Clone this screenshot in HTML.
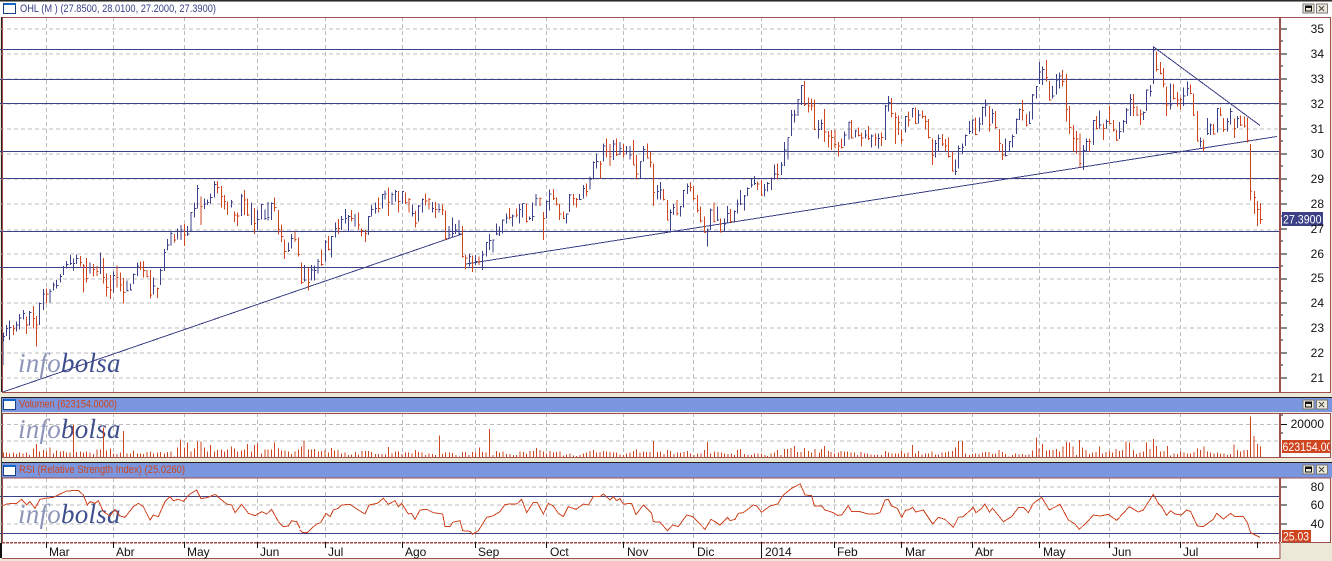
<!DOCTYPE html>
<html><head><meta charset="utf-8"><title>OHL</title>
<style>html,body{margin:0;padding:0;background:#ece9d8}svg{display:block}text{font-family:"Liberation Sans",sans-serif}.l{font-family:"Liberation Serif",serif;font-style:italic;font-size:27px;letter-spacing:.25px}</style></head>
<body>
<svg width="1332" height="561" viewBox="0 0 1332 561" xmlns="http://www.w3.org/2000/svg">
<rect width="1332" height="561" fill="#ece9d8"/>
<rect width="1332" height="1.5" fill="#2a2a2a"/>
<rect x="0" y="2" width="1332" height="15" fill="#fff"/>
<rect x="2" y="17" width="1328" height="375" fill="#fff"/>
<rect x="2" y="413" width="1328" height="44" fill="#fff"/>
<rect x="2" y="478" width="1328" height="64" fill="#fff"/>
<rect x="2" y="542" width="1277" height="16" fill="#fff"/>
<rect x="1" y="397" width="1331" height="1" fill="#222"/><rect x="1" y="398" width="1331" height="14" fill="#7a96de"/>
<rect x="1" y="462" width="1331" height="1" fill="#222"/><rect x="1" y="463" width="1331" height="14.5" fill="#7a96de"/>
<rect x="1" y="17" width="1" height="375" fill="#222"/>
<rect x="1" y="397" width="1" height="65" fill="#444"/><rect x="1" y="462" width="1" height="81" fill="#444"/><rect x="0" y="543" width="2" height="15" fill="#111"/>
<g shape-rendering="crispEdges">
<path d="M0 29H1279M0 54H1279M0 79H1279M0 104H1279M0 129H1279M0 154H1279M0 179H1279M0 204H1279M0 230H1279M0 254H1279M0 279H1279M0 303H1279M0 328H1279M0 353H1279M0 378H1279M0 424.5H1279M0 441H1279M0 487H1279M0 505H1279M0 524H1279" stroke="#bcbcbc" stroke-dasharray="4 3" fill="none"/>
<path d="M46.5 17V392M113.5 17V392M184.5 17V392M257.5 17V392M325.5 17V392M402.5 17V392M475.5 17V392M546.5 17V392M623.5 17V392M693.5 17V392M761.5 17V392M834.5 17V392M901.5 17V392M972.5 17V392M1039.5 17V392M1109.5 17V392M1180.5 17V392M46.5 413V457M113.5 413V457M184.5 413V457M257.5 413V457M325.5 413V457M402.5 413V457M475.5 413V457M546.5 413V457M623.5 413V457M693.5 413V457M761.5 413V457M834.5 413V457M901.5 413V457M972.5 413V457M1039.5 413V457M1109.5 413V457M1180.5 413V457M46.5 478V542M113.5 478V542M184.5 478V542M257.5 478V542M325.5 478V542M402.5 478V542M475.5 478V542M546.5 478V542M623.5 478V542M693.5 478V542M761.5 478V542M834.5 478V542M901.5 478V542M972.5 478V542M1039.5 478V542M1109.5 478V542M1180.5 478V542" stroke="#bcbcbc" stroke-dasharray="4 3" fill="none"/>
</g>
<text class="l" x="18" y="372" fill="#8d95b8" style="font-family:'Liberation Serif',serif" >info<tspan fill="#3f4f8c">bolsa</tspan></text>
<text class="l" x="18" y="438" fill="#8d95b8" style="font-family:'Liberation Serif',serif">info<tspan fill="#3f4f8c">bolsa</tspan></text>
<text class="l" x="18" y="523" fill="#8d95b8" style="font-family:'Liberation Serif',serif">info<tspan fill="#3f4f8c">bolsa</tspan></text>
<g shape-rendering="crispEdges" fill="none">
<path d="M0 49.5H1279M0 79.5H1279M0 103.5H1279M0 151.5H1279M0 178.5H1279M0 231.5H1279M0 267.5H1279M0 496.5H1279M0 533.5H1279" stroke="#3c4187"/>
<path d="M3 392L462 234M466 264L1277 136.5M1153 46.5L1260 125.5" stroke="#3c4187"/>
<g transform="translate(0 160) scale(.33333)" stroke-width="3">
<path stroke="#3c4187" d="M10 518V545M10 530h5M19 495V528M19 506h5M29 482V540M29 502h5M50 484V515M50 495h5M59 462V508M59 474h5M70 450V478M70 460h5M89 453V496M89 458h5M119 427V495M119 430h5M130 387V450M130 402h5M150 387V427M150 395h5M160 368V392M160 375h5M170 360V385M170 376h5M181 342V368M181 350h5M191 318V345M191 322h5M200 303V325M200 313h5M211 285V315M211 310h5M220 295V332M220 310h5M230 283V312M230 295h5M270 307V340M301 277V342M340 335V398M340 346h5M381 362V395M381 392h5M391 370V392M391 390h5M401 340V372M401 344h5M412 308V348M412 318h5M461 353V403M461 378h5M482 325V375M482 332h5M493 267V333M493 277h5M503 237V272M503 255h5M513 215V256M513 220h5M533 205V238M533 215h5M543 195V240M543 210h5M563 198V228M563 222h5M573 156V215M573 157h5M584 128V172M584 145h5M592 75V145M592 85h5M613 115V147M613 132h5M622 118V135M622 128h5M632 100V130M632 112h5M644 63V113M644 73h5M694 120V142M694 126h5M724 102V168M724 108h5M754 128V195M773 150V210M773 178h5M785 132V178M785 134h5M795 148V180M795 175h5M804 126V182M804 172h5M815 127V180M815 130h5M865 247V276M865 272h5M875 222V265M875 235h5M914 315V365M914 360h5M935 315V362M935 330h5M944 316V362M944 332h5M954 297V340M954 305h5M9 545V615"/>
<path stroke="#cf4520" d="M40 495V525M40 505h5M80 470V522M80 495h5M100 438V505M100 475h5M109 468V560M109 495h5M140 385V430M140 402h5M241 288V320M241 307h5M250 312V398M250 318h5M260 294V368M260 355h5M280 312V350M280 328h5M291 318V348M291 335h5M310 294V370M310 352h5M320 340V410M320 382h5M331 345V417M331 390h5M351 316V382M351 352h5M361 338V395M361 375h5M371 354V430M371 397h5M421 305V330M421 322h5M431 303V353M431 332h5M441 330V352M441 350h5M451 330V416M451 405h5M472 382V414M472 385h5M523 222V248M523 240h5M553 192V258M553 225h5M603 110V195M603 140h5M653 63V100M653 82h5M664 78V142M664 110h5M673 105V148M673 124h5M683 125V165M704 155V186M704 165h5M713 157V198M713 168h5M733 90V165M733 120h5M743 115V168M743 165h5M763 144V222M763 190h5M824 113V155M824 142h5M835 150V224M835 208h5M845 193V246M845 230h5M854 238V297M854 274h5M885 215V246M885 238h5M895 232V290M895 283h5M905 307V372M905 368h5M925 322V392M925 368h5"/>
</g>
<g transform="translate(320 120) scale(.33333)" stroke-width="3">
<path stroke="#3c4187" d="M16 360V425M16 366h5M35 348V413M35 350h5M46 308V352M46 325h5M65 288V330M65 298h5M76 267V310M76 295h5M86 285V334M86 290h5M105 282V320M146 288V345M146 290h5M155 255V290M155 268h5M166 248V280M166 266h5M187 222V266M187 224h5M195 212V238M195 222h5M216 218V255M216 224h5M226 210V245M226 214h5M247 213V250M247 215h5M278 253V290M278 280h5M296 255V305M296 258h5M307 235V278M307 238h5M337 246V278M337 265h5M357 250V278M357 268h5M387 318V355M387 345h5M397 292V352M397 340h5M407 312V342M407 330h5M417 300V344M417 340h5M448 400V440M448 410h5M467 405V435M467 425h5M487 393V450M487 405h5M499 366V410M499 368h5M509 342V390M509 362h5M519 358V398M519 360h5M530 310V345M530 342h5M539 320V348M539 335h5M548 298V340M548 300h5M559 280V310M559 294h5M578 284V320M578 288h5M598 252V310M598 268h5M608 250V292M608 250h5M628 290V300M628 296h5M638 248V303M638 290h5M648 222V258M648 235h5M680 242V296M680 245h5M689 208V272M689 222h5M740 280V310M740 282h5M749 222V276M749 225h5M779 222V240M779 238h5M790 195V235M790 205h5M810 170V208M810 178h5M820 125V178M820 127h5M830 100V145M830 125h5M851 70V125M851 78h5M881 60V120M881 72h5M900 66V105M900 85h5M920 78V103M920 95h5M930 78V118M930 105h5"/>
<path stroke="#cf4520" d="M5 388V438M5 433h5M26 348V392M26 388h5M55 297V342M55 326h5M95 270V305M95 295h5M115 278V328M115 315h5M125 325V350M125 332h5M136 330V366M136 340h5M176 232V278M176 266h5M205 202V288M205 247h5M236 213V277M236 245h5M257 218V252M257 248h5M267 234V278M267 238h5M287 272V323M287 309h5M317 220V256M317 243h5M327 234V268M327 238h5M347 246V294M347 268h5M367 253V285M367 270h5M377 272V360M377 355h5M427 318V412M427 410h5M437 405V448M437 414h5M458 407V456M477 410V435M477 425h5M569 264V298M569 292h5M589 266V292M589 285h5M619 250V308M619 305h5M660 232V258M660 235h5M670 276V360M670 295h5M700 207V240M700 235h5M710 232V256M710 252h5M719 252V300M719 282h5M730 275V297M730 295h5M760 222V257M760 235h5M769 234V262M769 238h5M799 190V230M799 215h5M841 123V175M841 132h5M860 55V112M860 95h5M870 72V138M870 110h5M890 55V108M890 103h5M910 72V112M910 102h5M940 60V135M940 135h5M950 105V178M950 162h5"/>
</g>
<g transform="translate(640 70) scale(.33333)" stroke-width="3">
<path stroke="#3c4187" d="M1 274V325M1 275h5M11 228V275M11 238h5M52 345V388M52 365h5M61 336V388M61 360h5M91 418V487M91 428h5M100 402V435M100 412h5M121 408V440M121 410h5M130 360V412M130 362h5M142 340V372M142 350h5M202 475V530M202 480h5M212 415V480M212 420h5M232 410V453M232 450h5M253 445V485M253 462h5M263 408V458M263 430h5M283 422V455M283 425h5M292 388V430M292 402h5M302 360V405M302 402h5M313 375V422M313 378h5M323 352V378M323 355h5M334 325V352M334 345h5M343 318V345M343 340h5M373 342V380M373 360h5M383 336V365M383 340h5M394 322V360M394 325h5M404 284V328M404 312h5M424 276V315M424 285h5M434 216V288M434 240h5M444 202V268M444 203h5M454 120V198M454 135h5M464 120V158M464 135h5M474 87V138M474 88h5M485 45V105M485 47h5M535 150V205M535 178h5M544 148V180M544 160h5M614 185V228M614 195h5M627 155V208M627 157h5M646 180V202M646 183h5M676 180V205M676 195h5M695 193V233M695 198h5M715 190V236M715 205h5M737 105V210M737 108h5M746 78V125M746 98h5M797 138V188M797 140h5M817 114V143M817 116h5M836 120V160M836 135h5M886 210V262M886 220h5M896 193V245M896 205h5M946 268V315M946 305h5M956 226V295M956 235h5"/>
<path stroke="#cf4520" d="M22 220V265M22 264h5M31 244V293M31 278h5M40 280V408M40 367h5M70 357V392M70 388h5M82 390V452M82 450h5M111 390V437M111 430h5M151 336V364M151 352h5M161 348V392M161 385h5M172 375V427M172 422h5M182 410V458M182 453h5M193 440V488M193 487h5M222 398V458M222 455h5M241 445V488M241 486h5M272 417V458M272 455h5M353 335V360M353 342h5M364 330V378M364 375h5M412 280V328M412 314h5M493 33V108M493 104h5M505 82V128M505 108h5M515 86V122M515 108h5M523 88V180M523 178h5M554 117V216M554 186h5M565 183V233M565 198h5M575 180V240M575 203h5M585 180V236M585 224h5M595 216V260M595 228h5M605 205V235M605 232h5M635 150V206M635 204h5M656 172V200M656 196h5M665 187V230M665 204h5M685 168V210M685 206h5M706 190V228M706 204h5M725 187V228M725 202h5M755 84V143M755 130h5M766 127V222M766 142h5M775 136V195M775 157h5M785 180V220M785 210h5M806 125V170M806 150h5M827 112V162M827 160h5M848 122V146M848 140h5M857 136V178M857 155h5M866 147V205M866 203h5M877 205V285M877 256h5M907 192V228M907 222h5M916 207V243M916 228h5M926 202V262M926 260h5M937 245V305M937 303h5"/>
</g>
<g transform="translate(960 40) scale(.33333)" stroke-width="3">
<path stroke="#3c4187" d="M7 310V342M7 322h5M17 283V318M17 286h5M28 243V282M28 275h5M38 238V280M38 240h5M58 232V275M58 252h5M68 200V255M68 203h5M77 178V230M77 195h5M97 207V250M97 220h5M137 296V350M137 346h5M148 303V335M148 305h5M158 284V322M158 290h5M170 235V282M170 238h5M178 205V240M178 208h5M208 215V252M208 250h5M218 162V238M218 165h5M229 138V175M229 140h5M238 66V132M238 96h5M248 80V135M248 88h5M278 138V175M278 168h5M289 102V163M289 120h5M299 98V145M299 108h5M371 315V390M371 332h5M380 296V335M380 305h5M401 240V315M401 242h5M419 212V265M419 255h5M440 238V265M440 245h5M479 246V297M479 275h5M491 240V278M491 244h5M500 204V252M500 210h5M511 162V228M511 178h5M551 214V240M551 218h5M560 148V213M560 150h5M571 135V170M571 155h5M581 20V132M581 30h5M631 130V208M631 195h5M671 142V198M671 168h5M682 124V168M682 145h5M721 292V322M721 305h5M742 234V285M742 280h5M751 250V285M751 255h5M772 204V278M772 205h5M802 234V274M802 245h5M812 204V254M812 215h5M832 228V264M832 235h5"/>
<path stroke="#cf4520" d="M47 232V285M47 283h5M88 198V275M88 255h5M107 213V265M107 262h5M118 267V335M118 310h5M128 312V360M128 345h5M187 180V242M187 212h5M199 222V260M199 255h5M259 60V125M259 113h5M269 123V182M269 180h5M308 90V140M308 125h5M319 102V245M319 208h5M329 198V282M329 263h5M340 255V335M340 295h5M350 273V342M350 297h5M360 280V382M360 370h5M388 296V335M388 305h5M409 228V268M409 266h5M431 250V300M431 265h5M449 198V252M449 250h5M460 240V275M460 270h5M470 270V303M470 300h5M520 162V228M520 202h5M531 198V228M531 225h5M542 208V255M542 222h5M590 35V95M590 88h5M601 66V103M601 100h5M611 84V142M611 132h5M620 140V228M620 195h5M641 132V178M641 175h5M652 156V200M652 180h5M661 172V208M661 178h5M691 134V162M691 160h5M700 160V228M700 225h5M712 213V305M712 303h5M731 298V334M731 325h5M761 252V284M761 282h5M781 202V228M781 225h5M791 234V276M791 268h5M823 235V294M823 265h5M842 226V258M842 255h5M853 230V262M853 258h5M863 232V308M863 302h5M871 312V482M871 453h5M883 453V522M883 472h5M893 483V558M893 508h5M902 489V552M902 538h5"/>
</g>
<g transform="translate(0 340) scale(.33333)" stroke-width="3" stroke="#cf4520">
<path d="M10 352V338M19 352V338M29 352V340M40 352V338M50 352V342M59 352V338M69 352V340M80 352V338M89 352V345M100 352V325M109 352V312M119 352V335M130 352V330M140 352V335M150 352V322M160 352V340M170 352V332M181 352V335M191 352V333M200 352V338M210 352V337M220 352V255M230 352V336M241 352V335M250 352V338M260 352V335M270 352V338M280 352V342M291 352V328M301 352V328M310 352V262M320 352V332M331 352V325M340 352V340M351 352V342M361 352V338M371 352V273M381 352V340M391 352V340M401 352V332M412 352V340M421 352V340M431 352V342M441 352V336M451 352V334M461 352V340M472 352V338M482 352V336M493 352V340M503 352V336M513 352V334M523 352V350M533 352V322M541 352V298M553 352V322M563 352V308M573 352V335M584 352V325M592 352V305M603 352V305M613 352V322M622 352V335M632 352V315M644 352V335M653 352V330M664 352V328M673 352V335M683 352V328M694 352V320M704 352V325M713 352V335M724 352V332M733 352V328M743 352V312M754 352V335M763 352V315M773 352V310M785 352V340M795 352V328M804 352V328M815 352V328M824 352V308M835 352V325M845 352V332M855 352V332M865 352V335M875 352V342M885 352V335M895 352V328"/>
<polyline fill="none" points="8,497 20,492 38,490 50,490 65,478 80,495 90,485 105,505 120,478 135,475 160,472 185,460 200,453 235,451 250,465 262,495 270,485 285,490 295,482 310,515 330,528 345,508 360,528 375,532 400,500 415,490 430,500 450,540 460,525 475,530 495,485 510,470 520,482 535,478 550,484 570,462 590,450 603,476 625,472 645,463 665,480 680,492 695,495 705,518 725,493 745,520 765,527 785,515 800,522 815,508 835,545 850,560 865,558 875,542 890,545 900,565"/>
</g>
<g transform="translate(300 400) scale(.33333)" stroke-width="3" stroke="#cf4520">
<path d="M5 172V140M12 172V123M25 172V148M34 172V148M43 172V147M56 172V155M65 172V153M75 172V150M85 172V158M94 172V144M104 172V151M114 172V150M125 172V160M135 172V158M145 172V165M155 172V163M166 172V156M176 172V164M186 172V153M196 172V153M206 172V153M215 172V156M226 172V162M236 172V162M246 172V162M256 172V164M265 172V141M276 172V160M286 172V154M296 172V155M306 172V162M316 172V158M326 172V158M336 172V160M346 172V150M356 172V156M366 172V158M376 172V165M387 172V160M397 172V162M407 172V165M418 172V107M427 172V162M437 172V157M449 172V158M458 172V159M468 172V165M478 172V170M488 172V156M497 172V156M507 172V165M517 172V156M527 172V158M538 172V143M548 172V156M558 172V157M568 172V87M579 172V165M589 172V153M599 172V158M609 172V155M620 172V162M630 172V162M640 172V165M650 172V165M660 172V155M670 172V156M680 172V160M690 172V153M700 172V153M710 172V144M720 172V150M730 172V155M740 172V160M750 172V153M760 172V158M770 172V156M780 172V155M790 172V166M800 172V164M810 172V160M820 172V166M830 172V168M840 172V165M850 172V160M860 172V158M870 172V153M880 172V150M890 172V158M900 172V156M910 172V153M920 172V155M930 172V156M940 172V157M950 172V158M960 172V163M970 172V165M980 172V160M990 172V158M1000 172V153M1010 172V148M1020 172V158M1030 172V155M1040 172V156M1050 172V156M1060 172V123M1072 172V156M1082 172V155M1092 172V162M1102 172V150M1112 172V153M1122 172V162M1132 172V157M1142 172V158M1152 172V156M1162 172V153M1172 172V160M1182 172V165M1192 172V160M1203 172V160M1213 172V150M1222 172V126M1232 172V160M1244 172V155M1254 172V156M1264 172V158M1274 172V160M1284 172V162M1294 172V160M1304 172V165M1312 172V150M1322 172V147M1334 172V162M1344 172V165M1354 172V165M1364 172V160M1374 172V160"/>
<polyline fill="none" points="0,390 8,398 22,398 35,385 50,372 62,368 78,340 90,350 100,330 115,325 125,315 150,313 175,330 195,342 207,315 232,310 250,295 265,313 285,302 295,320 305,310 325,342 335,340 345,358 360,330 380,328 400,338 428,342 435,380 450,380 458,367 480,362 488,392 510,394 518,403 535,392 560,352 578,348 600,335 615,313 650,312 665,298 680,338 700,307 712,308 730,342 745,310 760,318 775,340 790,350 805,320 828,328 850,312 865,315 880,290 900,290 910,282 930,300 940,290 950,302 960,296 970,312 995,310 1008,344 1030,315 1055,340 1060,365 1080,366 1102,392 1118,375 1135,380 1160,345 1178,350 1215,388 1233,358 1245,365 1260,375 1283,352 1290,362 1305,358 1315,340 1330,338 1360,315 1370,318 1385,337 1410,318 1433,312 1450,285 1475,265 1500,252"/>
</g>
<g transform="translate(760 400) scale(.33333)" stroke-width="3" stroke="#cf4520">
<path d="M5 172V160M15 172V165M23 172V168M33 172V160M43 172V158M53 172V150M63 172V165M73 172V147M83 172V147M93 172V144M103 172V138M113 172V156M123 172V156M133 172V144M145 172V153M155 172V158M165 172V147M178 172V158M185 172V147M193 172V138M205 172V153M213 172V156M223 172V160M235 172V158M243 172V153M253 172V155M263 172V155M273 172V158M283 172V158M293 172V165M303 172V156M313 172V160M323 172V160M333 172V163M343 172V165M353 172V163M365 172V165M376 172V153M386 172V158M396 172V160M406 172V160M416 172V160M424 172V153M434 172V160M444 172V158M458 172V135M466 172V160M476 172V153M486 172V163M496 172V160M506 172V160M516 172V155M526 172V163M536 172V163M546 172V158M556 172V158M566 172V155M577 172V153M587 172V143M595 172V123M607 172V123M617 172V160M629 172V165M637 172V162M647 172V160M657 172V162M667 172V158M676 172V156M687 172V156M697 172V162M707 172V160M717 172V150M727 172V156M737 172V162M747 172V170M757 172V165M767 172V160M777 172V163M787 172V162M797 172V165M807 172V163M817 172V152M829 172V113M837 172V145M847 172V132M859 172V152M869 172V150M879 172V150M889 172V147M899 172V155M909 172V140M919 172V126M929 172V128M939 172V140M949 172V165M958 172V120M968 172V143M978 172V150M988 172V162M998 172V158M1008 172V156M1018 172V140M1028 172V160M1038 172V156M1048 172V153M1058 172V158M1068 172V147M1078 172V153M1088 172V150M1098 172V125M1108 172V128M1120 172V150M1130 172V162M1140 172V158M1150 172V155M1160 172V128M1170 172V147M1180 172V117M1190 172V138M1202 172V155M1212 172V153M1222 172V138M1232 172V166M1242 172V160M1252 172V162M1262 172V155M1272 172V158M1282 172V160M1292 172V160M1302 172V156M1312 172V145M1322 172V150M1332 172V140M1342 172V155M1352 172V158M1362 172V160M1372 172V158M1382 172V160M1392 172V160M1402 172V165M1412 172V162M1422 172V134M1432 172V150M1442 172V155M1452 172V150M1462 172V150M1472 172V50M1482 172V108M1492 172V132M1502 172V140"/>
<polyline fill="none" points="120,250 135,285 155,287 163,318 185,318 195,330 220,338 232,346 245,345 265,317 275,335 300,335 325,342 345,342 360,338 375,300 385,298 395,318 412,325 425,352 437,330 445,330 458,322 467,336 490,330 518,372 535,352 555,358 580,382 595,352 610,350 640,322 648,338 665,325 675,312 688,336 698,325 730,365 755,350 775,323 790,322 805,338 820,310 845,292 868,330 900,313 925,360 945,372 958,388 985,362 1000,345 1020,348 1045,343 1070,361 1108,320 1135,336 1150,330 1180,283 1195,310 1205,320 1220,346 1232,332 1245,342 1265,345 1280,330 1292,335 1312,378 1330,380 1360,358 1370,340 1390,357 1412,340 1425,350 1450,350 1462,368 1472,398 1500,412"/>
</g>
<path d="M2.5 17V392M2.5 413V457M2.5 478V542" stroke="#a04f4f"/>
<path d="M2 17.5H1330.5V392.5H2M2 413.5H1330.5V457.5H2M2 478H1330.5V542.5H1281" stroke="#a04f4f"/>
<path d="M2 542.5H1280" stroke="#a04f4f" stroke-dasharray="3 1" stroke-width="1.5"/>
<path d="M2 558.5H1280V543" stroke="#a04f4f"/>
<path d="M1280 17V392M1280 413V457M1280 478V542" stroke="#a04f4f" stroke-width="2"/>
<path d="M1281 29h6M1281 54h6M1281 79h6M1281 104h6M1281 129h6M1281 154h6M1281 179h6M1281 204h6M1281 229h6M1281 254h6M1281 279h6M1281 303h6M1281 328h6M1281 353h6M1281 378h6M1281 41h2M1281 66h2M1281 91h2M1281 116h2M1281 141h2M1281 166h2M1281 191h2M1281 216h2M1281 241h2M1281 266h2M1281 291h2M1281 315h2M1281 340h2M1281 365h2M1281 424.5h6M1281 415h2M1281 433h2M1281 487h6M1281 505h6M1281 524h6M46.5 542v6M113.5 542v6M184.5 542v6M257.5 542v6M325.5 542v6M402.5 542v6M475.5 542v6M546.5 542v6M623.5 542v6M693.5 542v6M761.5 542v16M834.5 542v6M901.5 542v6M972.5 542v6M1039.5 542v6M1109.5 542v6M1180.5 542v6M1257.5 542v6" stroke="#111"/>
<rect x="1282" y="212" width="41" height="14" fill="#3c4187"/>
<rect x="1282" y="440" width="48" height="13" fill="#cf4520"/>
<rect x="1282" y="530" width="29" height="12" fill="#cf4520"/>
</g>
<g font-size="12" fill="#111" text-anchor="end">
<text x="1324" y="33">35</text><text x="1324" y="58">34</text><text x="1324" y="83">33</text><text x="1324" y="108">32</text><text x="1324" y="133">31</text><text x="1324" y="158">30</text><text x="1324" y="183">29</text><text x="1324" y="208">28</text><text x="1324" y="233">27</text><text x="1324" y="258">26</text><text x="1324" y="282">25</text><text x="1324" y="307">24</text><text x="1324" y="332">23</text><text x="1324" y="357">22</text><text x="1324" y="382">21</text>
<text x="1324" y="428">20000</text><text x="1324" y="491">80</text><text x="1324" y="509">60</text><text x="1324" y="528">40</text>
</g>
<g font-size="12" fill="#fff">
<text x="1283" y="223.5" textLength="38.5" lengthAdjust="spacingAndGlyphs">27.3900</text>
<svg x="1282" y="440" width="48" height="13"><text x="0.5" y="11" textLength="50" lengthAdjust="spacingAndGlyphs">623154.00</text></svg>
<text x="1283" y="540.5" textLength="26" lengthAdjust="spacingAndGlyphs">25.03</text>
</g>
<g font-size="12" fill="#111">
<text x="49" y="556">Mar</text><text x="116" y="556">Abr</text><text x="187" y="556">May</text><text x="260" y="556">Jun</text><text x="328" y="556">Jul</text><text x="405" y="556">Ago</text><text x="478" y="556">Sep</text><text x="550" y="556">Oct</text><text x="627" y="556">Nov</text><text x="697" y="556">Dic</text><text x="765" y="556">2014</text><text x="837" y="556">Feb</text><text x="905" y="556">Mar</text><text x="975" y="556">Abr</text><text x="1043" y="556">May</text><text x="1112" y="556">Jun</text><text x="1183" y="556">Jul</text>
</g>
<text x="20" y="12" font-size="11" fill="#3c4187" textLength="196" lengthAdjust="spacingAndGlyphs">OHL (M ) (27.8500, 28.0100, 27.2000, 27.3900)</text>
<text x="19" y="407.5" font-size="11" fill="#cf4520" textLength="98" lengthAdjust="spacingAndGlyphs">Volumen (623154.0000)</text>
<text x="19" y="473" font-size="11" fill="#cf4520" textLength="166" lengthAdjust="spacingAndGlyphs">RSI (Relative Strength Index) (25.0260)</text>
<g shape-rendering="crispEdges">
<rect x="3.5" y="3.5" width="12" height="10" fill="#fff" stroke="#1a3f8a"/><rect x="4" y="3" width="12" height="2" fill="#1566c8"/>
<rect x="3.5" y="399.5" width="12" height="10" fill="#fff" stroke="#1a3f8a"/><rect x="4" y="399" width="12" height="2" fill="#1566c8"/>
<rect x="3.5" y="465.5" width="12" height="10" fill="#fff" stroke="#1a3f8a"/><rect x="4" y="465" width="12" height="2" fill="#1566c8"/>
<rect x="1303" y="4" width="11" height="9" fill="#ece9d8" stroke="#777"/><rect x="1305.5" y="6" width="6" height="5" fill="none" stroke="#111"/><rect x="1305" y="6" width="7" height="2" fill="#111"/>
<rect x="1316.5" y="4" width="11" height="9" fill="#ece9d8" stroke="#777"/>
<rect x="1303" y="400" width="11" height="9" fill="#ece9d8" stroke="#777"/><rect x="1305.5" y="402" width="6" height="5" fill="none" stroke="#111"/><rect x="1305" y="402" width="7" height="2" fill="#111"/>
<rect x="1316.5" y="400" width="11" height="9" fill="#ece9d8" stroke="#777"/>
<rect x="1303" y="465" width="11" height="9" fill="#ece9d8" stroke="#777"/><rect x="1305.5" y="467" width="6" height="5" fill="none" stroke="#111"/><rect x="1305" y="467" width="7" height="2" fill="#111"/>
<rect x="1316.5" y="465" width="11" height="9" fill="#ece9d8" stroke="#777"/>
</g>
<path d="M1319 6l5 5M1324 6l-5 5M1319 402l5 5M1324 402l-5 5M1319 467l5 5M1324 467l-5 5" stroke="#444" fill="none"/>
</svg>
</body></html>
